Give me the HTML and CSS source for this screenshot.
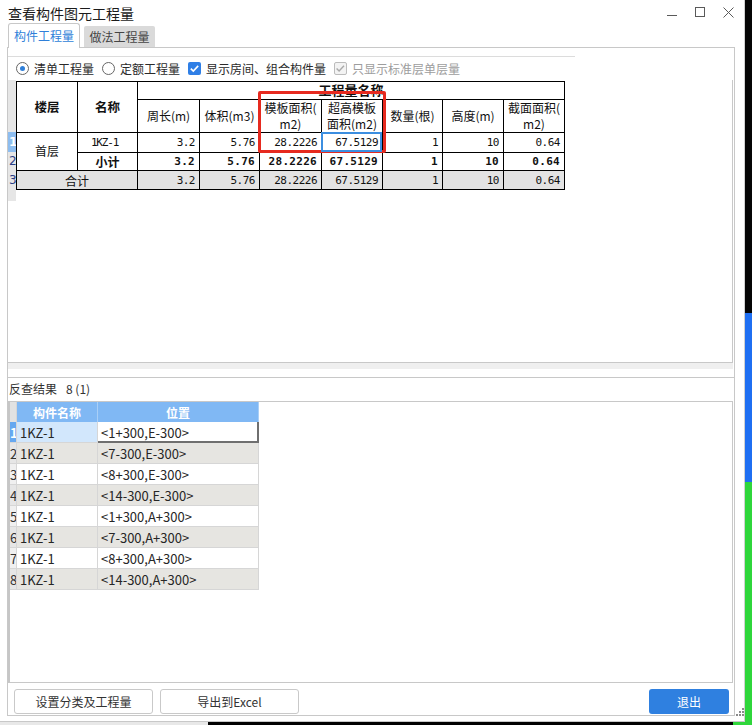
FILE: index.html
```html
<!DOCTYPE html>
<html lang="zh-CN">
<head>
<meta charset="utf-8">
<title>查看构件图元工程量</title>
<link rel="stylesheet" href="styles.css">
</head>
<body>
<div class="main">
  <div class="window">
    <div class="titlebar">
      <span class="title">查看构件图元工程量</span>
      <div class="controls">
        <svg width="11" height="11" viewBox="0 0 11 11"><path d="M0 8.5H10" stroke="#5a5a5a" stroke-width="1" fill="none"/></svg>
        <svg width="11" height="11" viewBox="0 0 11 11"><rect x="0.5" y="0.5" width="9" height="9" stroke="#5a5a5a" stroke-width="1" fill="none"/></svg>
        <svg width="11" height="11" viewBox="0 0 11 11"><path d="M0.5 0.5L10.5 10.5M10.5 0.5L0.5 10.5" stroke="#5a5a5a" stroke-width="1" fill="none"/></svg>
      </div>
    </div>
    <div class="tabs">
      <div class="tab active">构件工程量</div>
      <div class="tab">做法工程量</div>
    </div>
    <div class="panel">
      <div class="topline"></div>
      <div class="options">
        <div class="opt"><span class="radio on"></span>清单工程量</div>
        <div class="opt"><span class="radio"></span>定额工程量</div>
        <div class="opt"><span class="check"><svg width="13" height="13" viewBox="0 0 13 13"><path d="M2.8 6.6L5.3 9.1L10.2 3.9" stroke="#fff" stroke-width="1.6" fill="none"/></svg></span>显示房间、组合构件量</div>
        <div class="opt disabled"><span class="check off"><svg width="13" height="13" viewBox="0 0 13 13"><path d="M2.6 6.4L5.1 8.9L10 3.7" stroke="#a9a9a9" stroke-width="1.4" fill="none"/></svg></span>只显示标准层单层量</div>
      </div>
      <div class="upper">
        <div class="rowheads">
          <div class="rh-head"></div>
          <div class="rh sel r20">1</div>
          <div class="rh r18">2</div>
          <div class="rh r19">3</div>
          <div class="rh-fill"></div>
        </div>
        <div class="qty-wrap">
          <div class="qty">
            <div class="c hb span-floor">楼层</div>
            <div class="c hb span-name">名称</div>
            <div class="c htitle"><span>工程量名称</span></div>
            <div class="c h2">周长(m)</div>
            <div class="c h2">体积(m3)</div>
            <div class="c h2">模板面积(<br>m2)</div>
            <div class="c h2">超高模板<br>面积(m2)</div>
            <div class="c h2">数量(根)</div>
            <div class="c h2">高度(m)</div>
            <div class="c h2">截面面积(<br>m2)</div>

            <div class="c floor">首层</div>
            <div class="c code">1KZ-1</div>
            <div class="c num">3.2</div>
            <div class="c num">5.76</div>
            <div class="c num">28.2226</div>
            <div class="c num">67.5129</div>
            <div class="c num">1</div>
            <div class="c num">10</div>
            <div class="c num">0.64</div>

            <div class="c sub">小计</div>
            <div class="c num bold">3.2</div>
            <div class="c num bold">5.76</div>
            <div class="c num bold">28.2226</div>
            <div class="c num bold">67.5129</div>
            <div class="c num bold">1</div>
            <div class="c num bold">10</div>
            <div class="c num bold">0.64</div>

            <div class="c total">合计</div>
            <div class="c num gray">3.2</div>
            <div class="c num gray">5.76</div>
            <div class="c num gray">28.2226</div>
            <div class="c num gray">67.5129</div>
            <div class="c num gray">1</div>
            <div class="c num gray">10</div>
            <div class="c num gray">0.64</div>
          </div>
          <div class="redbox"></div>
          <div class="focus"></div>
        </div>
      </div>
      <div class="hband"></div>
      <div class="lower">
        <div class="lower-label">反查结果<span class="count">8 (1)</span></div>
        <div class="lbox">
          <div class="lgrid">
            <div class="lc rn rn-head"></div>
            <div class="lc lh">构件名称</div>
            <div class="lc lh">位置</div>

            <div class="lc rn rn-sel">1</div>
            <div class="lc cur-row">1KZ-1</div>
            <div class="lc cur-cell">&lt;1+300,E-300&gt;</div>

            <div class="lc rn even">2</div>
            <div class="lc even">1KZ-1</div>
            <div class="lc even">&lt;7-300,E-300&gt;</div>

            <div class="lc rn">3</div>
            <div class="lc">1KZ-1</div>
            <div class="lc">&lt;8+300,E-300&gt;</div>

            <div class="lc rn even">4</div>
            <div class="lc even">1KZ-1</div>
            <div class="lc even">&lt;14-300,E-300&gt;</div>

            <div class="lc rn">5</div>
            <div class="lc">1KZ-1</div>
            <div class="lc">&lt;1+300,A+300&gt;</div>

            <div class="lc rn even">6</div>
            <div class="lc even">1KZ-1</div>
            <div class="lc even">&lt;7-300,A+300&gt;</div>

            <div class="lc rn">7</div>
            <div class="lc">1KZ-1</div>
            <div class="lc">&lt;8+300,A+300&gt;</div>

            <div class="lc rn even">8</div>
            <div class="lc even">1KZ-1</div>
            <div class="lc even">&lt;14-300,A+300&gt;</div>
          </div>
        </div>
      </div>
      <div class="buttons">
        <button class="btn">设置分类及工程量</button>
        <button class="btn">导出到Excel</button>
        <button class="btn primary">退出</button>
      </div>
    </div>
    <svg class="grip" width="8" height="8" viewBox="0 0 8 8">
      <rect x="6" y="0" width="2" height="2" fill="#8a8a8a"/>
      <rect x="3" y="3" width="2" height="2" fill="#8a8a8a"/>
      <rect x="6" y="3" width="2" height="2" fill="#8a8a8a"/>
      <rect x="0" y="6" width="2" height="2" fill="#8a8a8a"/>
      <rect x="3" y="6" width="2" height="2" fill="#8a8a8a"/>
      <rect x="6" y="6" width="2" height="2" fill="#8a8a8a"/>
    </svg>
  </div>
  <div class="bottomstrip">
    <div class="bs-light"></div>
    <div class="bs-dark"></div>
    <div class="bs-green"></div>
  </div>
</div>
<div class="side"></div>
</body>
</html>
```

FILE: styles.css
```css
html, body {
  margin: 0;
  padding: 0;
}
body {
  width: 752px;
  height: 725px;
  overflow: hidden;
  display: flex;
  background: #fff;
  font-family: "Noto Sans CJK SC", "Noto Sans", sans-serif;
  color: #222;
}
.main {
  width: 745px;
  flex: none;
  display: flex;
  flex-direction: column;
}
.window {
  position: relative;
  height: 722px;
  flex: none;
  box-sizing: border-box;
  border-bottom: 1px solid #c8c8c8;
  border-right: 1px solid #d0d0d0;
  background: #fff;
}

/* title bar */
.titlebar {
  height: 23px;
  display: flex;
  align-items: flex-start;
}
.title {
  padding: 3px 0 0 8px;
  font-size: 14px;
  line-height: 20px;
  color: #1b1b1b;
}
.controls {
  margin-left: auto;
  display: flex;
  gap: 17px;
  padding: 7px 10px 0 0;
}
.controls svg { display: block; }

/* tabs */
.tabs {
  height: 24px;
  display: flex;
  align-items: flex-end;
  gap: 4px;
  padding-left: 8px;
}
.tab {
  width: 71px;
  height: 21px;
  box-sizing: border-box;
  background: #dadada;
  color: #444;
  font-size: 12px;
  line-height: 21px;
  text-align: center;
  border-radius: 2px 2px 0 0;
}
.tab.active {
  width: 72px;
  height: 25px;
  line-height: 24px;
  margin-bottom: -1px;
  position: relative;
  z-index: 1;
  background: #fff;
  color: #2f7fd9;
  border: 1px solid #c8c8c8;
  border-bottom: none;
  border-radius: 3px 3px 0 0;
}

/* panel */
.panel {
  margin-left: 7px;
  width: 728px;
  height: 669px;
  box-sizing: border-box;
  border: 1px solid #c8c8c8;
  display: flex;
  flex-direction: column;
}
.topline {
  margin-top: 8px;
  width: 567px;
  height: 0;
  border-top: 1px solid #dcdcdc;
}
.options {
  height: 23px;
  display: flex;
  align-items: center;
  padding-left: 8px;
  gap: 8px;
  font-size: 12px;
  color: #2a2a2a;
}
.opt {
  display: flex;
  align-items: center;
  gap: 5px;
  line-height: 16px;
}
.opt.disabled { color: #9d9d9d; }
.radio {
  width: 13px;
  height: 13px;
  box-sizing: border-box;
  border: 1px solid #666;
  border-radius: 50%;
  background: #fff;
  display: flex;
  align-items: center;
  justify-content: center;
}
.radio.on::after {
  content: "";
  width: 5px;
  height: 5px;
  border-radius: 50%;
  background: #2f7fd9;
}
.check {
  width: 13px;
  height: 13px;
  box-sizing: border-box;
  border-radius: 2px;
  background: #2f7fe6;
  display: flex;
}
.check svg { display: block; }
.check.off {
  background: #f3f3f3;
  border: 1px solid #bcbcbc;
}
.check.off svg { margin: -1px; }

/* upper quantity grid */
.upper {
  height: 283px;
  flex: none;
  box-sizing: border-box;
  border-bottom: 1px solid #c8c8c8;
  margin-right: 1px;
  border-right: 1px solid #c8c8c8;
  display: flex;
}
.rowheads {
  width: 8px;
  display: flex;
  flex-direction: column;
  font-family: "DejaVu Sans", sans-serif;
  font-size: 12px;
}
.rh-head { height: 52px; background: #e6e6e6; }
.rh {
  background: #e6e6e6;
  color: #2b3f86;
  overflow: hidden;
  display: flex;
  align-items: center;
  padding-left: 1px;
  white-space: nowrap;
}
.rh.sel { background: #8dbdf0; color: #fff; font-weight: bold; }
.r20 { height: 20px; }
.r18 { height: 18px; }
.r19 { height: 19px; }
.rh-fill { height: 12px; background: #e6e6e6; }

.qty-wrap {
  position: relative;
  margin-top: 1px;
  align-self: flex-start;
}
.qty {
  display: grid;
  grid-template-columns: 61px 60px 62px 60px 62px 61px 60px 61px 61px;
  grid-template-rows: 18px 33px 20px 18px 19px;
  border-left: 1px solid #000;
  border-top: 1px solid #000;
  background: #fff;
}
.c {
  box-sizing: border-box;
  border-right: 1px solid #000;
  border-bottom: 1px solid #000;
  display: flex;
  align-items: center;
  justify-content: center;
  text-align: center;
  font-size: 12px;
  line-height: 15px;
  color: #111;
  overflow: hidden;
  white-space: nowrap;
}
.hb { font-weight: bold; font-size: 12.5px; padding-bottom: 2px; }
.span-floor { grid-row: 1 / 3; grid-column: 1; }
.span-name { grid-row: 1 / 3; grid-column: 2; }
.htitle {
  grid-row: 1;
  grid-column: 3 / 10;
  align-items: flex-start;
  font-weight: bold;
  font-size: 13px;
  line-height: 15px;
}
.htitle span { display: block; }
.h2 { line-height: 16px; }
.floor { grid-row: 3 / 5; grid-column: 1; padding-bottom: 2px; }
.total { grid-row: 5; grid-column: 1 / 3; background: #e3e3e3; }
.code {
  font-family: "DejaVu Sans Mono", monospace;
  font-size: 11px;
  letter-spacing: -1.2px;
  padding-right: 6px;
}
.sub { font-weight: bold; }
.num {
  justify-content: flex-end;
  padding-right: 4px;
  font-family: "DejaVu Sans Mono", "Liberation Mono", monospace;
  font-size: 11px;
  letter-spacing: -0.5px;
}
.num.bold { font-weight: bold; letter-spacing: 0.3px; }
.num.gray { background: #e3e3e3; }

.redbox {
  position: absolute;
  left: 242px;
  top: 10px;
  width: 128px;
  height: 62px;
  box-sizing: border-box;
  border: 3px solid #e62a1f;
  border-radius: 2px;
}
.focus {
  position: absolute;
  left: 305px;
  top: 51px;
  width: 61px;
  height: 20px;
  box-sizing: border-box;
  border: 2px solid #3c8ee0;
}

.hband {
  height: 6px;
  flex: none;
  background: #efefef;
  margin-bottom: 8px;
  margin-right: 1px;
}

/* lower grid */
.lower {
  border-top: 1px solid #c8c8c8;
  display: flex;
  flex-direction: column;
}
.lower-label {
  height: 23px;
  box-sizing: border-box;
  padding: 2px 0 0 1px;
  font-size: 12px;
  line-height: 18px;
  color: #333;
}
.count { margin-left: 9px; }
.lbox {
  height: 282px;
  box-sizing: border-box;
  border-top: 1px solid #c8c8c8;
  border-bottom: 1px solid #c8c8c8;
  border-left: 2px solid #c6c6c6;
  border-right: 1px solid #c8c8c8;
  margin-right: 1px;
}
.lgrid {
  display: grid;
  grid-template-columns: 7px 81px 161px;
  grid-template-rows: 20px repeat(8, 21px);
}
.lc {
  box-sizing: border-box;
  border-right: 1px solid #d6d6d6;
  border-bottom: 1px solid #d6d6d6;
  display: flex;
  align-items: center;
  padding-left: 3px;
  font-size: 13px;
  color: #262626;
  white-space: nowrap;
  overflow: hidden;
  background: #fff;
}
.lc.even { background: #e6e5e1; }
.lh {
  justify-content: center;
  padding-left: 0;
  background: #80b8f4;
  color: #fff;
  font-weight: bold;
  font-size: 12px;
  border-right-color: #a9cff7;
  border-bottom: none;
}
.rn {
  padding-left: 0;
  font-size: 13px;
  color: #333;
  background: #f0f0f0;
}
.rn.even { background: #e6e6e6; }
.rn-head { background: #e2e2e2; border-bottom: none; }
.rn-sel { background: #66a8f0; color: #fff; font-weight: bold; }
.cur-row { background: #d2e7fc; }
.cur-cell {
  box-shadow: inset -2px 0 0 #6f6f6f, inset 0 -2px 0 #6f6f6f;
  border-right: none;
  border-bottom: none;
}

/* buttons */
.buttons {
  height: 32px;
  flex: none;
  box-sizing: border-box;
  padding: 6px 5px 0 6px;
  display: flex;
  align-items: flex-start;
  gap: 7px;
}
.btn {
  width: 139px;
  height: 25px;
  box-sizing: border-box;
  border: 1px solid #c9c9c9;
  border-radius: 3px;
  background: #fff;
  font-family: "Noto Sans CJK SC", "Noto Sans", sans-serif;
  font-size: 12px;
  color: #333;
  padding: 0;
}
.btn.primary {
  width: 80px;
  margin-left: auto;
  border: none;
  background: #2f80e0;
  color: #fff;
}

.grip {
  position: absolute;
  left: 736px;
  top: 708px;
}

/* screen edges */
.bottomstrip {
  height: 3px;
  flex: none;
  display: flex;
}
.bs-light { width: 208px; flex: none; background: #e8e8e8; }
.bs-dark { flex: 1; background: #000; }
.bs-green { width: 12px; flex: none; background: #2fd63b; }
.side {
  width: 7px;
  height: 725px;
  flex: none;
  background: linear-gradient(to bottom, #050505 0, #050505 313px, #1f6ff2 313px, #1f6ff2 482px, #2fd63b 482px, #2fd63b 100%);
}
```
